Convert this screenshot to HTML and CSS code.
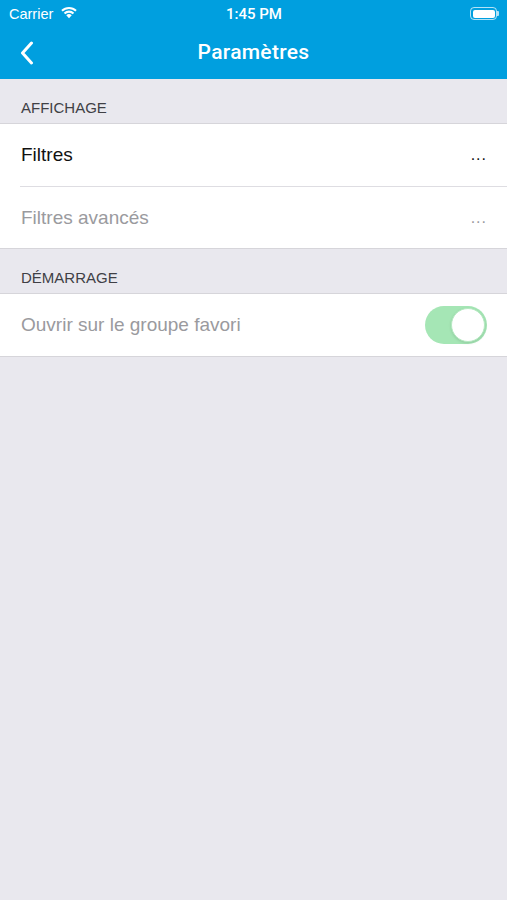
FILE: index.html
```html
<!DOCTYPE html>
<html lang="fr">
<head>
<meta charset="utf-8">
<link rel="stylesheet" href="styles.css">
</head>
<body>
<div class="app">
  <header class="topbar">
    <div class="status">
      <div class="status-left">
        <span class="carrier">Carrier</span>
        <svg class="wifi" width="18" height="13" viewBox="0 0 17 12">
          <path d="M8.5 11.5 L5.9 8.6 A3.8 3.8 0 0 1 11.1 8.6 Z" fill="#fff"/>
          <path d="M3.6 6.2 A7 7 0 0 1 13.4 6.2 L12.1 7.6 A5.2 5.2 0 0 0 4.9 7.6 Z" fill="#fff"/>
          <path d="M1.2 3.7 A10.5 10.5 0 0 1 15.8 3.7 L14.5 5.1 A8.6 8.6 0 0 0 2.5 5.1 Z" fill="#fff"/>
        </svg>
      </div>
      <span class="time">1:45 PM</span>
      <div class="status-right">
        <div class="battery"><div class="battery-fill"></div></div>
        <div class="battery-tip"></div>
      </div>
    </div>
    <nav class="navbar">
      <svg class="back" width="14" height="24" viewBox="0 0 14 24">
        <path d="M11.5 2 L2.5 12 L11.5 22" fill="none" stroke="#fff" stroke-width="3" stroke-linecap="round" stroke-linejoin="round"/>
      </svg>
      <h1 class="title">Paramètres</h1>
    </nav>
  </header>

  <main class="content">
    <div class="section-header">AFFICHAGE</div>
    <div class="group">
      <div class="row">
        <span class="label">Filtres</span>
        <span class="dots">...</span>
      </div>
      <div class="row muted">
        <span class="label">Filtres avancés</span>
        <span class="dots">...</span>
      </div>
    </div>

    <div class="section-header">DÉMARRAGE</div>
    <div class="group">
      <div class="row muted">
        <span class="label">Ouvrir sur le groupe favori</span>
        <span class="switch"><span class="knob"></span></span>
      </div>
    </div>
  </main>
</div>
</body>
</html>
```

FILE: styles.css
```css
* { box-sizing: border-box; }
html, body {
  margin: 0;
  padding: 0;
  height: 100%;
}
body {
  font-family: "Liberation Sans", Arial, sans-serif;
  background: #e9e8ee;
  -webkit-font-smoothing: antialiased;
}
.app {
  min-height: 900px;
  background: #e9e8ee;
}
.topbar {
  background: #009fdf;
  color: #fff;
}
.status {
  height: 27px;
  display: grid;
  grid-template-columns: 1fr auto 1fr;
  align-items: center;
  padding: 0 8px 0 9px;
}
.status-left {
  display: flex;
  align-items: center;
  gap: 7px;
}
.carrier {
  font-size: 14.5px;
}
.wifi { margin-top: -3px; }
.time {
  font-family: Roboto, "Liberation Sans", sans-serif;
  font-size: 15px;
  font-weight: 500;
}
.status-right {
  display: flex;
  justify-content: flex-end;
  align-items: center;
}
.battery {
  width: 27px;
  height: 13px;
  border: 1px solid rgba(255,255,255,0.7);
  border-radius: 4px;
  padding: 1.5px;
}
.battery-fill {
  width: 100%;
  height: 100%;
  background: #fff;
  border-radius: 2px;
}
.battery-tip {
  width: 2px;
  height: 5px;
  background: rgba(255,255,255,0.7);
  border-radius: 0 1px 1px 0;
}
.navbar {
  height: 52px;
  display: flex;
  align-items: center;
  justify-content: center;
  position: relative;
}
.back {
  position: absolute;
  left: 20px;
  top: 14px;
}
.title {
  margin: 0 0 2px;
  font-family: Roboto, "Liberation Sans", sans-serif;
  font-size: 21px;
  font-weight: 500;
  letter-spacing: 0.3px;
}
.section-header {
  height: 44px;
  padding: 0 21px 7px;
  display: flex;
  align-items: flex-end;
  font-size: 15px;
  color: #404045;
}
.group {
  background: #fff;
  border-top: 1px solid #d6d5da;
  border-bottom: 1px solid #d6d5da;
}
.row {
  height: 62px;
  display: flex;
  align-items: center;
  justify-content: space-between;
  padding: 0 20px 0 21px;
  font-size: 19px;
  color: #111;
}
.row + .row {
  border-top: 1px solid #dedde2;
  margin-left: 20px;
  padding-left: 1px;
}
.row.muted { color: #9a9a9e; }
.dots {
  font-size: 16px;
  letter-spacing: 1px;
}
.switch {
  width: 62px;
  height: 38px;
  border-radius: 19px;
  background: #a5e6b5;
  display: flex;
  justify-content: flex-end;
  align-items: center;
  padding: 2px;
  margin-right: 0;
}
.knob {
  width: 34px;
  height: 34px;
  border-radius: 50%;
  background: #fff;
  border: 1px solid #b6eac2;
  box-shadow: 0 1px 3px rgba(0,0,0,0.12);
}
```
